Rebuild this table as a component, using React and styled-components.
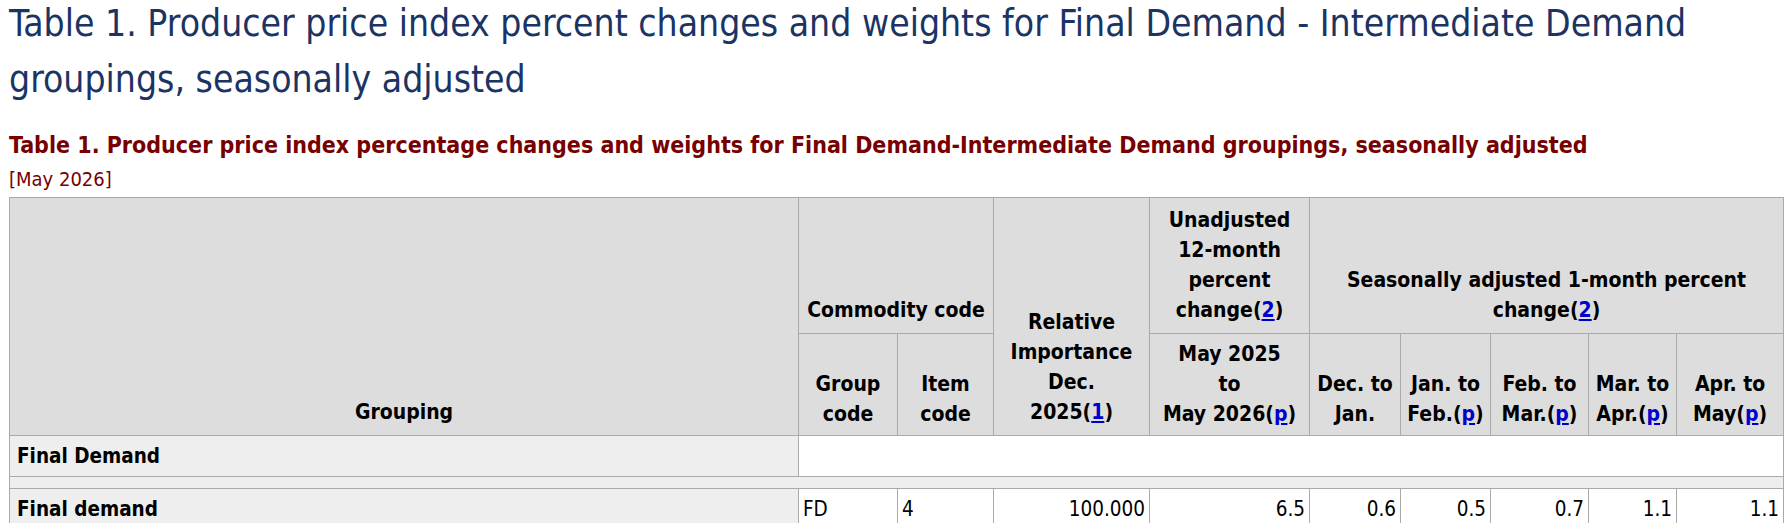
import React from "react";
import styled, { createGlobalStyle } from "styled-components";

const GlobalStyle = createGlobalStyle`
    html, body {
        margin: 0;
        padding: 0;
        background: #fff;
        overflow: hidden;
    }
    body {
        font-family: "DejaVu Sans Condensed", Tahoma, "Liberation Sans", sans-serif;
        color: #000;
    }
`;

const Page = styled.div`
    padding: 0 0 0 9px;
`;

const Title = styled.h1`
    margin: -4px 0 0;
    font-size: 37px;
    line-height: 56px;
    font-weight: normal;
    color: #1b3464;
`;

const Caption = styled.div`
    margin-top: 24px;
    font-size: 23px;
    line-height: 26px;
    font-weight: bold;
    color: #700;
`;

const DateLine = styled.div`
    margin-top: 9px;
    font-size: 20px;
    line-height: 24px;
    color: #700;
`;

const Table = styled.table`
    margin-top: 6px;
    width: 1774px;
    table-layout: fixed;
    border-collapse: collapse;
    border: 1px solid #aaa;
`;

const Th = styled.th`
    background: #ddd;
    border: 1px solid #aaa;
    padding: ${({ $sub }) => ($sub ? "5px 4px 6px" : "7px 4px 8px")};
    font-size: 21px;
    line-height: 30px;
    font-weight: bold;
    text-align: center;
    vertical-align: bottom;
`;

const Td = styled.td`
    border: 1px solid #aaa;
    padding: 5px 4px;
    font-size: 20.5px;
    line-height: 30px;
    text-align: ${({ $num }) => ($num ? "right" : "left")};
    vertical-align: top;
    background: #fff;
`;

const GroupCell = styled(Td)`
    background: #eee;
    font-weight: bold;
    padding-left: 7px;
`;

const SpacerCell = styled.td`
    height: 11px;
    padding: 0;
    background: #eee;
    border: 1px solid #aaa;
`;

const Note = styled.a`
    color: #00c;
    text-decoration: underline;
`;

const widths = [789, 99, 96, 156, 160, 91, 90, 98, 88, 107];

const monthCols = [
    ["Dec. to", "Jan.", false],
    ["Jan. to", "Feb.", true],
    ["Feb. to", "Mar.", true],
    ["Mar. to", "Apr.", true],
    ["Apr. to", "May", true],
];

const rows = [
    { name: "Final demand", group: "FD", item: "4", values: ["100.000", "6.5", "0.6", "0.5", "0.7", "1.1", "1.1"] },
];

export default function App() {
    return (
        <>
            <GlobalStyle />
            <Page>
                <Title>
                    Table 1. Producer price index percent changes and weights for Final Demand - Intermediate Demand
                    groupings, seasonally adjusted
                </Title>
                <Caption>
                    Table 1. Producer price index percentage changes and weights for Final Demand-Intermediate Demand
                    groupings, seasonally adjusted
                </Caption>
                <DateLine>[May 2026]</DateLine>
                <Table>
                    <colgroup>
                        {widths.map((w, i) => (
                            <col key={i} style={{ width: w }} />
                        ))}
                    </colgroup>
                    <thead>
                        <tr>
                            <Th rowSpan={2}>Grouping</Th>
                            <Th colSpan={2}>Commodity code</Th>
                            <Th rowSpan={2}>
                                Relative
                                <br />
                                Importance
                                <br />
                                Dec.
                                <br />
                                2025(<Note href="#">1</Note>)
                            </Th>
                            <Th>
                                Unadjusted
                                <br />
                                12-month
                                <br />
                                percent
                                <br />
                                change(<Note href="#">2</Note>)
                            </Th>
                            <Th colSpan={5}>
                                Seasonally adjusted 1-month percent
                                <br />
                                change(<Note href="#">2</Note>)
                            </Th>
                        </tr>
                        <tr>
                            <Th $sub>
                                Group
                                <br />
                                code
                            </Th>
                            <Th $sub>
                                Item
                                <br />
                                code
                            </Th>
                            <Th $sub>
                                May 2025
                                <br />
                                to
                                <br />
                                May 2026(<Note href="#">p</Note>)
                            </Th>
                            {monthCols.map(([a, b, p]) => (
                                <Th $sub key={a}>
                                    {a}
                                    <br />
                                    {b}
                                    {p && (
                                        <>
                                            (<Note href="#">p</Note>)
                                        </>
                                    )}
                                </Th>
                            ))}
                        </tr>
                    </thead>
                    <tbody>
                        <tr>
                            <GroupCell>Final Demand</GroupCell>
                            <Td colSpan={9} />
                        </tr>
                        <tr>
                            <SpacerCell colSpan={10} />
                        </tr>
                        {rows.map((r) => (
                            <tr key={r.name}>
                                <GroupCell>{r.name}</GroupCell>
                                <Td>{r.group}</Td>
                                <Td>{r.item}</Td>
                                {r.values.map((v, i) => (
                                    <Td $num key={i}>
                                        {v}
                                    </Td>
                                ))}
                            </tr>
                        ))}
                    </tbody>
                </Table>
            </Page>
        </>
    );
}
